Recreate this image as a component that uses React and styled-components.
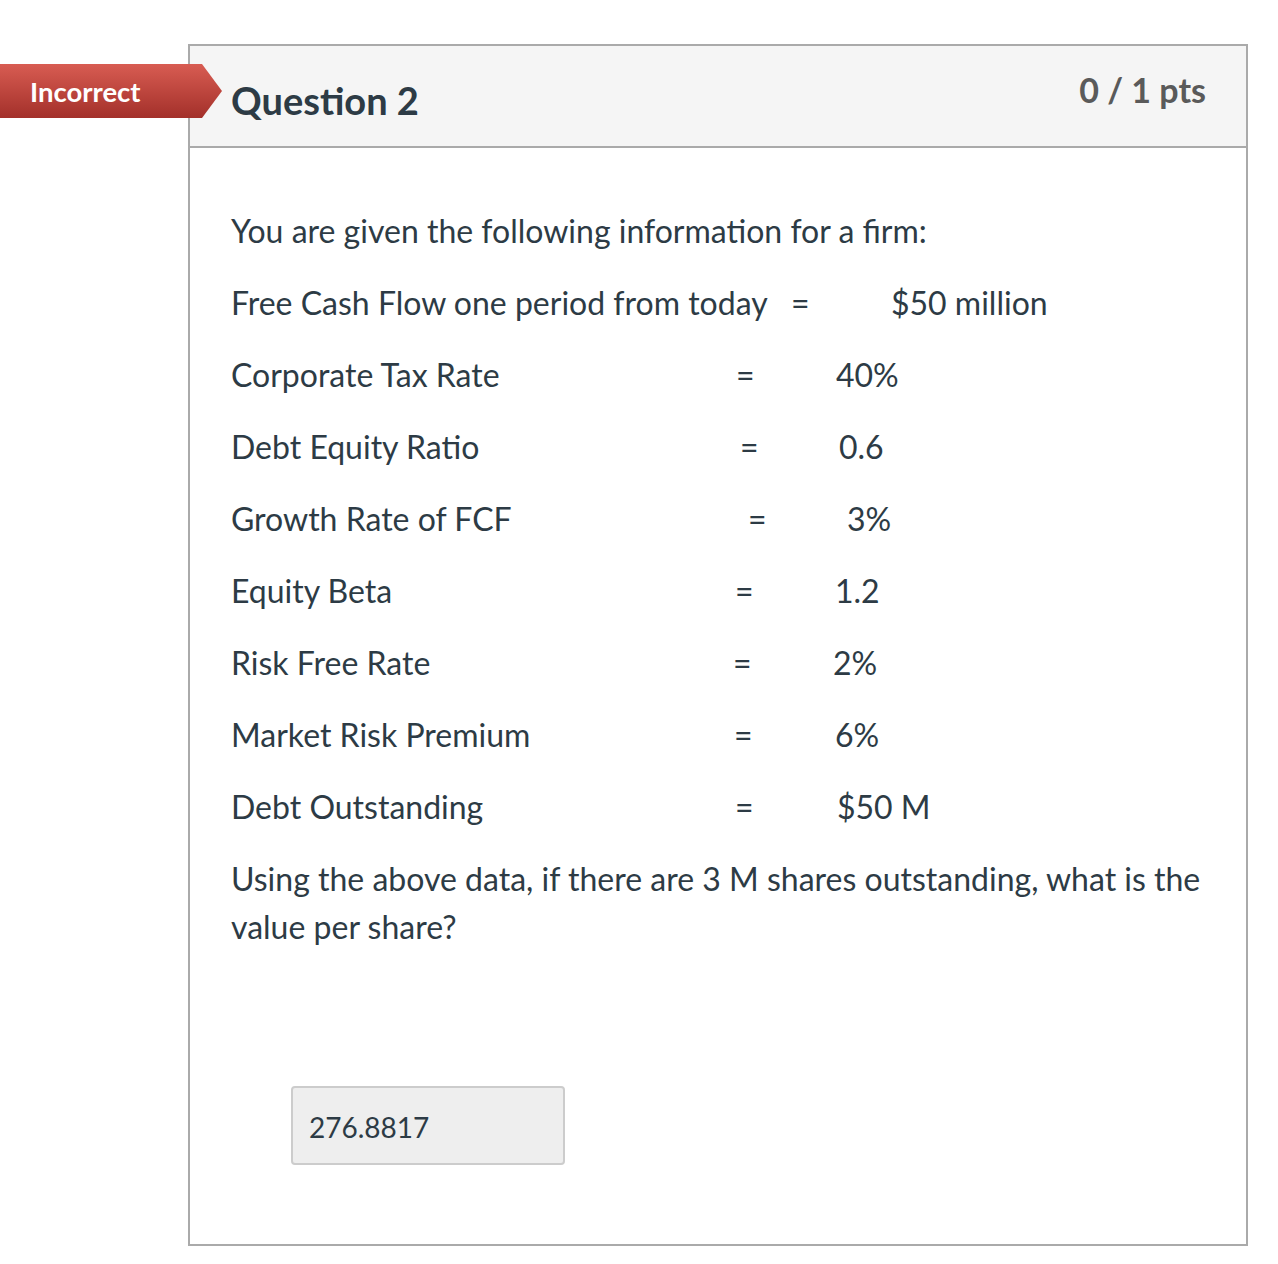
import React from "react";
import styled, { createGlobalStyle } from "styled-components";

const GlobalStyle = createGlobalStyle`
  body {
    margin: 0;
    background: #ffffff;
    font-family: Lato, "Open Sans", sans-serif;
    color: #2d3b45;
  }
`;

const Page = styled.div`
  padding: 44px 30px 20px 188px;
`;

const Card = styled.div`
  position: relative;
  width: 1060px;
  box-sizing: border-box;
  border: 2px solid #aaaaaa;
`;

const Banner = styled.div`
  position: absolute;
  left: -190px;
  top: 18px;
  width: 222px;
  height: 54px;
  display: flex;
  align-items: center;
  padding-left: 30px;
  box-sizing: border-box;
  background: linear-gradient(#d85c52, #a3302a);
  clip-path: polygon(0 0, 202px 0, 222px 50%, 202px 100%, 0 100%);
  color: #ffffff;
  font-size: 27.5px;
  font-weight: 700;
`;

const Header = styled.div`
  height: 100px;
  display: flex;
  justify-content: space-between;
  align-items: flex-start;
  background: #f5f5f5;
  border-bottom: 2px solid #aaaaaa;
  padding: 0 40px 0 41px;
`;

const Title = styled.h2`
  margin: 32px 0 0;
  font-size: 38px;
  font-weight: 700;
  line-height: 44px;
  color: #2d3b45;
`;

const Points = styled.div`
  margin-top: 24px;
  font-size: 34px;
  font-weight: 700;
  line-height: 40px;
  color: #5a5a5a;
`;

const Body = styled.div`
  padding: 59px 40px 79px 41px;
  font-size: 32px;
  line-height: 48px;
`;

const Para = styled.p`
  margin: 0 0 24px;
`;

const Row = styled.div`
  display: grid;
  grid-template-columns: ${(p) => p.eq}px ${(p) => p.val - p.eq}px auto;
  margin-bottom: 24px;
  white-space: nowrap;
`;

const Answer = styled.div`
  margin: 135px 0 0 60px;
  width: 274px;
  height: 79px;
  box-sizing: border-box;
  display: flex;
  align-items: center;
  padding: 2px 0 0 16px;
  background: #eeeeee;
  border: 2px solid #cccccc;
  border-radius: 4px;
  font-size: 28px;
  color: #2d3b45;
`;

const rows = [
  ["Free Cash Flow one period from today", 560, 660, "$50 million"],
  ["Corporate Tax Rate", 505, 605, "40%"],
  ["Debt Equity Ratio", 509, 608, "0.6"],
  ["Growth Rate of FCF", 517, 616, "3%"],
  ["Equity Beta", 504, 604, "1.2"],
  ["Risk Free Rate", 502, 602, "2%"],
  ["Market Risk Premium", 503, 604, "6%"],
  ["Debt Outstanding", 504, 606, "$50 M"],
];

export default function App() {
  return (
    <Page>
      <GlobalStyle />
      <Card>
        <Banner>Incorrect</Banner>
        <Header>
          <Title>Question 2</Title>
          <Points>0 / 1 pts</Points>
        </Header>
        <Body>
          <Para>You are given the following information for a firm:</Para>
          {rows.map(([label, eq, val, value]) => (
            <Row key={label} eq={eq} val={val}>
              <span>{label}</span>
              <span>=</span>
              <span>{value}</span>
            </Row>
          ))}
          <Para>
            Using the above data, if there are 3 M shares outstanding, what is the
            value per share?
          </Para>
          <Answer>276.8817</Answer>
        </Body>
      </Card>
    </Page>
  );
}
